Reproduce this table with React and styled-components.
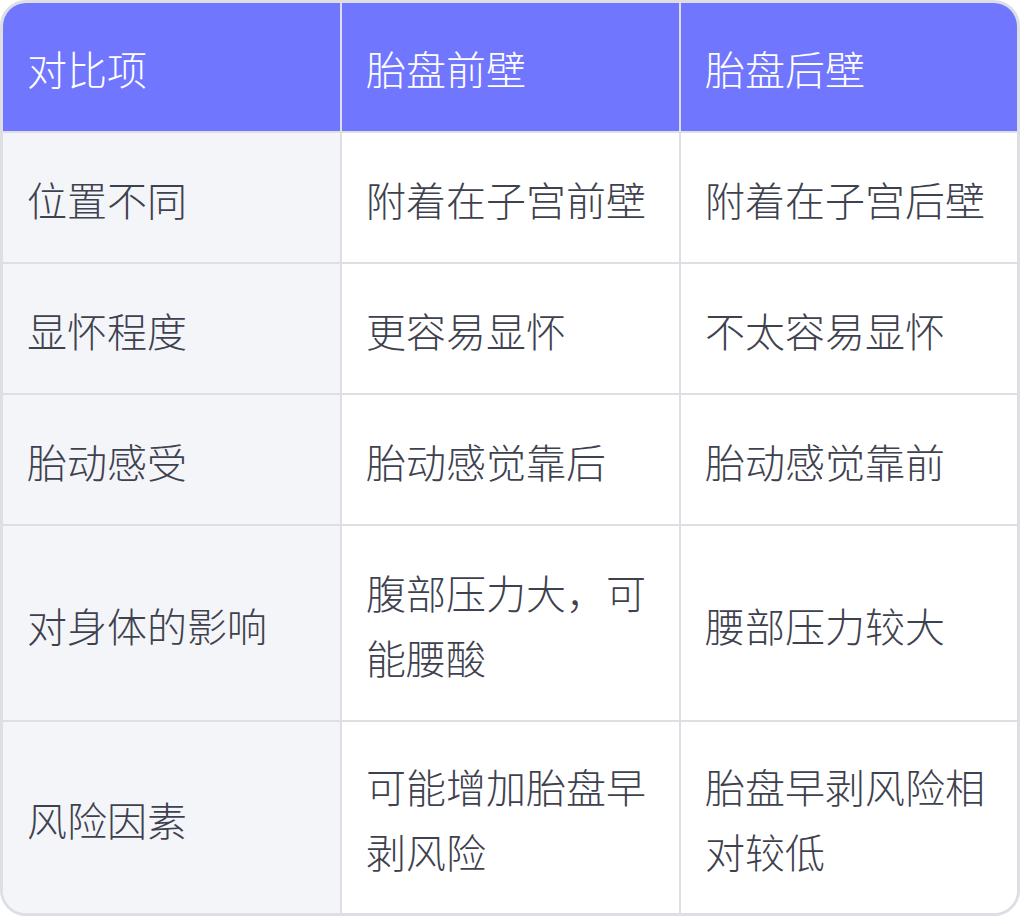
import React from "react";
import styled, { createGlobalStyle } from "styled-components";

const Global = createGlobalStyle`
  html, body { margin: 0; padding: 0; background: #ffffff; }
  body { font-family: "Noto Sans CJK SC", "Noto Sans", sans-serif; }
`;

const Table = styled.div`
  width: 1020px;
  box-sizing: border-box;
  border: 3px solid #dedfe4;
  border-radius: 26px;
  overflow: hidden;
  display: grid;
  grid-template-columns: 339px 339px 1fr;
  background: #ffffff;
`;

const Cell = styled.div`
  box-sizing: border-box;
  padding: ${(p) => (p.$head ? "33px 24px 31px" : p.$lastRow ? "32px 24px 29px" : "34px 24px 30px")};
  font-size: 40px;
  line-height: ${(p) => (p.$head ? "64px" : "65px")};
  font-weight: 300;
  display: flex;
  align-items: center;
  color: ${(p) => (p.$head ? "#ffffff" : "#3e414e")};
  background: ${(p) => (p.$head ? "#7176ff" : p.$first ? "#f4f5f9" : "#ffffff")};
  border-right: ${(p) => (p.$lastCol ? "none" : "2px solid #dedfe4")};
  border-bottom: ${(p) => (p.$lastRow ? "none" : "2px solid #dedfe4")};
  word-break: break-all;
`;

const head = ["对比项", "胎盘前壁", "胎盘后壁"];
const rows = [
  ["位置不同", "附着在子宫前壁", "附着在子宫后壁"],
  ["显怀程度", "更容易显怀", "不太容易显怀"],
  ["胎动感受", "胎动感觉靠后", "胎动感觉靠前"],
  ["对身体的影响", "腹部压力大，可能腰酸", "腰部压力较大"],
  ["风险因素", "可能增加胎盘早剥风险", "胎盘早剥风险相对较低"],
];

export default function App() {
  return (
    <>
      <Global />
      <Table>
        {head.map((h, i) => (
          <Cell key={"h" + i} $head $lastCol={i === 2}>
            {h}
          </Cell>
        ))}
        {rows.map((r, ri) =>
          r.map((c, ci) => (
            <Cell
              key={ri + "-" + ci}
              $first={ci === 0}
              $lastCol={ci === 2}
              $lastRow={ri === rows.length - 1}
            >
              {c}
            </Cell>
          ))
        )}
      </Table>
    </>
  );
}
